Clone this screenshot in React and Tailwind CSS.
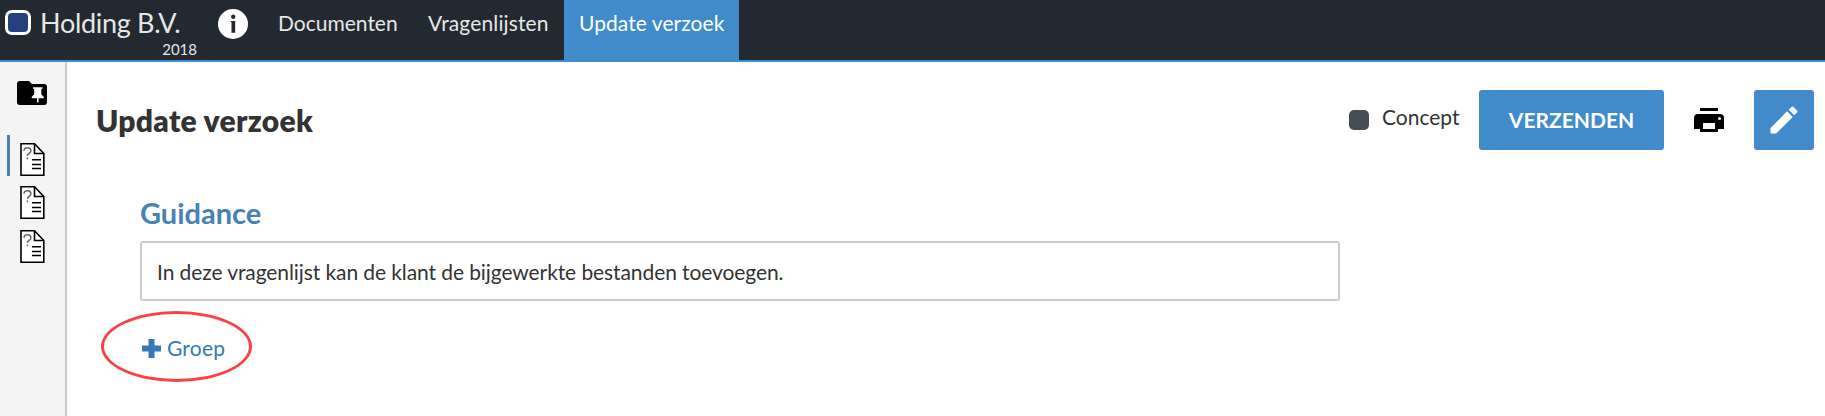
import React from "react";
import { MdEdit } from "react-icons/md";

function InfoIcon() {
  return (
    <svg width="30" height="30" viewBox="0 0 30 30" className="ml-[21px] mt-[9px] block shrink-0">
      <circle cx="15" cy="15" r="15" fill="#fff" />
      <circle cx="15.200" cy="7.800" r="2.200" fill="#222930" />
      <path d="M12.700 12h4.500v11.800h-3.700V13.200h-.8z" fill="#222930" />
    </svg>
  );
}

function FolderPinIcon() {
  return (
    <svg width="30" height="24" viewBox="0 0 30 24" className="block">
      <path d="M3 0h9l3 3h12a3 3 0 0 1 3 3v15a3 3 0 0 1-3 3H3a3 3 0 0 1-3-3V3a3 3 0 0 1 3-3z" fill="#000" />
      <path d="M16 6.300h9.500v1.500h-1.200v5.500l2.500 2.700v1.200h-5.300v4.300h-1.500v-4.300h-5.300V16l2.500-2.700V7.800H16z" fill="#fff" />
    </svg>
  );
}

function QuestionDocIcon() {
  return (
    <svg width="25" height="33" viewBox="0 0 25 33" className="block">
      <path d="M1 .8h13.500l9.300 9.700v21.700H1z" fill="#fff" stroke="#000" strokeWidth="1.600" />
      <path d="M14.500 .8v9.700h9.300" fill="none" stroke="#000" strokeWidth="1.600" />
      <path d="M4 7.800c0-2 1.400-3 3.500-3s3.400 1.100 3.400 2.900c0 2.600-3.500 2.700-3.500 5.300M7.400 14.600v1.600" fill="none" stroke="#666" strokeWidth="1.500" />
      <path d="M12 16.800h9M12 21.500h9M12 25.500h9" stroke="#000" strokeWidth="1.600" />
    </svg>
  );
}

function PrinterIcon() {
  return (
    <svg width="30" height="24" viewBox="0 0 30 24" className="block">
      <path d="M6 0h18v3H6z" />
      <path fillRule="evenodd" d="M4 6h22a4 4 0 0 1 4 4v11h-6v3H6v-3H0V10a4 4 0 0 1 4-4zm5 9v6h12v-6z" />
      <circle cx="25.500" cy="10.500" r="1.500" fill="#fff" />
    </svg>
  );
}

export default function App() {
  return (
    <div className="flex h-[416px] flex-col overflow-hidden bg-white font-['Lato',sans-serif] text-[21px] text-[#333]">
      <header className="flex h-[62px] shrink-0 border-b-2 border-[#428bca] bg-[#222930] text-[#e7e7e7]">
        <div className="flex w-[197px] flex-col pl-[5px]">
          <div className="flex h-[42px] items-center gap-[9px] pt-[4px]">
            <span className="mb-[1px] h-[25px] w-[26px] shrink-0 rounded-[7px] border-[3px] border-white bg-[#25407e]" />
            <span className="whitespace-nowrap text-[27px] leading-[40px] tracking-[-0.3px]">Holding B.V.</span>
          </div>
          <span className="self-end text-[15px] leading-[15px]">2018</span>
        </div>
        <InfoIcon />
        <nav className="ml-[14px] flex whitespace-nowrap leading-[46px]">
          <a className="w-[149px] pl-[16px]">Documenten</a>
          <a className="w-[153px] pl-[17px] tracking-[0.13px]">Vragenlijsten</a>
          <a className="w-[175px] bg-[#428bca] pl-[15px] tracking-[0.06px] text-white">Update verzoek</a>
        </nav>
      </header>
      <div className="flex flex-1">
        <aside className="flex w-[67px] shrink-0 flex-col border-r-2 border-[#ccc] bg-[#f4f4f4] pt-[19px]">
          <div className="pl-[17px]"><FolderPinIcon /></div>
          <div className="ml-[7px] mt-[30px] flex h-[41px] items-center border-l-[3px] border-[#4682b4] pl-[10px] pt-[8px]">
            <QuestionDocIcon />
          </div>
          <div className="mt-[10px] pl-[20px]"><QuestionDocIcon /></div>
          <div className="mt-[11px] pl-[20px]"><QuestionDocIcon /></div>
        </aside>
        <main className="flex flex-1 flex-col pt-[28px]">
          <div className="flex h-[60px] items-center pl-[29px] pr-[11px]">
            <h1 className="text-[30px] font-extrabold leading-[40px] tracking-[0.3px]">Update verzoek</h1>
            <div className="ml-auto flex items-center">
              <span className="size-5 rounded-[5px] bg-[#464d55]" />
              <span className="ml-[13px] w-[97px] pb-[6px]">Concept</span>
              <button className="h-[60px] w-[185px] rounded-[3px] bg-[#428bca] font-bold text-white">VERZENDEN</button>
              <span className="ml-[30px]"><PrinterIcon /></span>
              <button className="ml-[30px] flex size-[60px] items-center justify-center rounded-[3px] bg-[#428bca] text-white">
                <MdEdit className="size-9" />
              </button>
            </div>
          </div>
          <section className="pl-[73px] pt-[43px]">
            <h2 className="text-[29px] font-bold leading-[40px] text-[#4682b4]">Guidance</h2>
            <div className="mt-[8px] h-[60px] w-[1200px] rounded-[3px] border-2 border-[#ccc] pl-[15px] leading-[58px] tracking-[-0.09px]">
              In deze vragenlijst kan de klant de bijgewerkte bestanden toevoegen.
            </div>
            <div className="-ml-[39px] mt-[10px] flex h-[71px] w-[151px] items-center rounded-[50%] border-[3px] border-[#fb4141] pl-[38px] text-[#337ab7]">
              <svg width="19" height="19" viewBox="0 0 19 19" className="mt-[3px]">
                <path d="M6.500 0h6v6.500H19v6h-6.500V19h-6v-6.500H0v-6h6.500z" fill="currentColor" />
              </svg>
              <span className="ml-[6px] pt-[3px] tracking-[0.2px]">Groep</span>
            </div>
          </section>
        </main>
      </div>
    </div>
  );
}
